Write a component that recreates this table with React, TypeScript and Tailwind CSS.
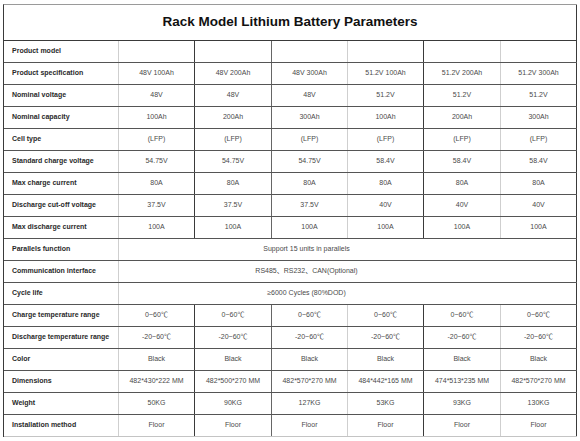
const font = {
  fontFamily: '"Liberation Sans", Arial, "Noto Sans CJK SC", sans-serif',
}

const colWidths = ["w-[76px]", "w-[77px]", "w-[76px]", "w-[76px]", "w-[77px]", "w-[76px]"]
const colBorders = [
  "border-[#3a3a3a]",
  "border-[#666666]",
  "border-[#cfcfcf]",
  "border-[#3a3a3a]",
  "border-[#cfcfcf]",
  "border-[#3a3a3a]",
]

type Row = { label: string; values?: string[]; merged?: string }

const rows: Row[] = [
  { label: "Product model", values: ["", "", "", "", "", ""] },
  {
    label: "Product specification",
    values: ["48V 100Ah", "48V 200Ah", "48V 300Ah", "51.2V 100Ah", "51.2V 200Ah", "51.2V 300Ah"],
  },
  { label: "Nominal voltage", values: ["48V", "48V", "48V", "51.2V", "51.2V", "51.2V"] },
  { label: "Nominal capacity", values: ["100Ah", "200Ah", "300Ah", "100Ah", "200Ah", "300Ah"] },
  { label: "Cell type", values: ["(LFP)", "(LFP)", "(LFP)", "(LFP)", "(LFP)", "(LFP)"] },
  {
    label: "Standard charge voltage",
    values: ["54.75V", "54.75V", "54.75V", "58.4V", "58.4V", "58.4V"],
  },
  { label: "Max charge current", values: ["80A", "80A", "80A", "80A", "80A", "80A"] },
  { label: "Discharge cut-off voltage", values: ["37.5V", "37.5V", "37.5V", "40V", "40V", "40V"] },
  { label: "Max discharge current", values: ["100A", "100A", "100A", "100A", "100A", "100A"] },
  { label: "Parallels function", merged: "Support 15 units in parallels" },
  { label: "Communication interface", merged: "RS485、RS232、CAN(Optional)" },
  { label: "Cycle life", merged: "≥6000 Cycles (80%DOD)" },
  {
    label: "Charge temperature range",
    values: ["0~60℃", "0~60℃", "0~60℃", "0~60℃", "0~60℃", "0~60℃"],
  },
  {
    label: "Discharge temperature range",
    values: ["-20~60℃", "-20~60℃", "-20~60℃", "-20~60℃", "-20~60℃", "-20~60℃"],
  },
  { label: "Color", values: ["Black", "Black", "Black", "Black", "Black", "Black"] },
  {
    label: "Dimensions",
    values: [
      "482*430*222 MM",
      "482*500*270 MM",
      "482*570*270 MM",
      "484*442*165 MM",
      "474*513*235 MM",
      "482*570*270 MM",
    ],
  },
  { label: "Weight", values: ["50KG", "90KG", "127KG", "53KG", "93KG", "130KG"] },
  {
    label: "Installation method",
    values: ["Floor", "Floor", "Floor", "Floor", "Floor", "Floor"],
  },
]

function TableRow({ row, last }: { row: Row; last: boolean }) {
  return (
    <div
      className={`flex h-[22px] border-b ${last ? "border-[#c4c4c4]" : "border-[#555555]"}`}
    >
      <div className="flex w-[115px] shrink-0 items-center border-r border-[#cfcfcf] pl-[8px] text-[7px] font-bold text-[#2a2a2a]">
        {row.label}
      </div>
      {row.merged ? (
        <div className="flex w-[458px] items-center justify-center border-r border-[#3a3a3a] pr-[82px] text-[7px] text-[#4a4a4a]">
          {row.merged}
        </div>
      ) : (
        row.values!.map((v, i) => (
          <div
            key={i}
            className={`flex ${colWidths[i]} shrink-0 items-center justify-center border-r ${colBorders[i]} text-[7px] text-[#4a4a4a]`}
          >
            {v}
          </div>
        ))
      )}
    </div>
  )
}

export default function App() {
  return (
    <div className="h-[441px] w-[580px] bg-white pl-[3px] pt-[4px]" style={font}>
      <div className="w-[574px] border-l border-t border-l-[#3a3a3a] border-t-[#9a9a9a]">
        <div className="flex h-[36px] items-center justify-center border-b border-r border-b-[#3a3a3a] border-r-[#3a3a3a] text-[13.5px] font-bold text-[#111111]">
          Rack Model Lithium Battery Parameters
        </div>
        {rows.map((r, i) => (
          <TableRow key={r.label} row={r} last={i === rows.length - 1} />
        ))}
      </div>
    </div>
  )
}
